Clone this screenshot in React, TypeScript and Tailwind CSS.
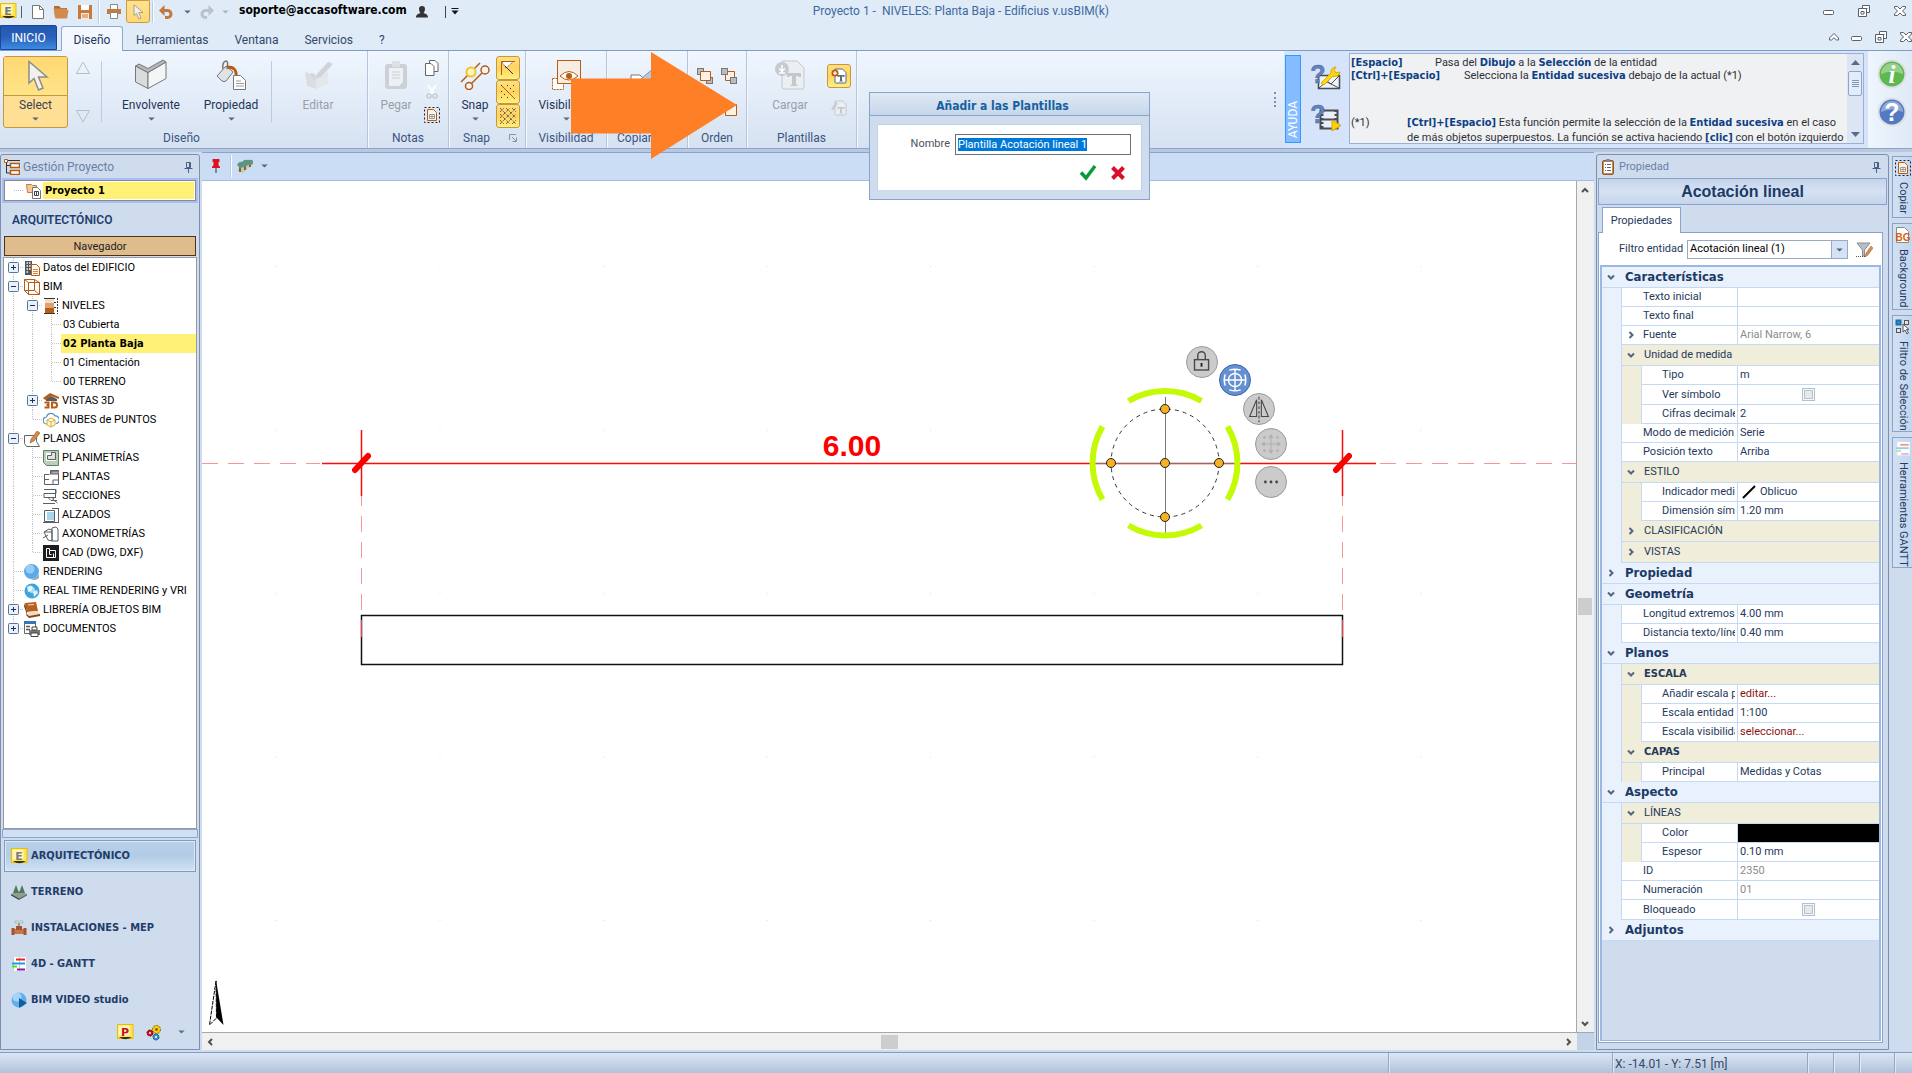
import React, { useEffect, useRef } from 'react';
import type { ReactNode } from 'react';

const TAHOMA_BOLD = "font-['DejaVu_Sans_Condensed','DejaVu_Sans',sans-serif] font-bold";
const BROWN = '#b85c14';

/* ---------- small shared drawings ---------- */

function Caret({ className = 'text-[#5b6678]' }: { className?: string }) {
  return (
    <svg width="7" height="4" viewBox="0 0 8 5" className={className} aria-hidden="true">
      <path d="M0 0.5h8L4 4.5z" fill="currentColor" />
    </svg>
  );
}

function CursorIcon({ w, h }: { w: number; h: number }) {
  return (
    <svg width={w} height={h} viewBox="0 0 22 32" aria-hidden="true">
      <path d="M2 1.5 L2 23 L7 18.5 L11.5 30 L16 28 L11.5 17 L20 17 Z" fill="#f3f1ee" stroke="#8c8c8c" strokeWidth="1.5" />
    </svg>
  );
}

function PageLogo({ letter, color = '#7a7a7a' }: { letter: string; color?: string }) {
  return (
    <svg width="17" height="17" viewBox="0 0 17 17" aria-hidden="true">
      <rect x="0.5" y="0.5" width="15.5" height="14" fill="#ffe44a" stroke="#e8bd0a" />
      <rect x="1.5" y="1.5" width="11" height="10" fill="#fff6bd" />
      <path d="M2 13 Q8 17.5 15 13 Z" fill="#3a3208" />
      <text x="8" y="11.5" textAnchor="middle" fontSize="11" fontWeight="bold" fill={color} fontFamily="DejaVu Sans, sans-serif">{letter}</text>
    </svg>
  );
}

function Pin() {
  return (
    <svg width="9" height="11" viewBox="0 0 9 11" stroke="#4a5f86" fill="none" aria-hidden="true">
      <path d="M2.5 0.5h4v5h-4zM0.5 6.5h8M4.5 7v4M5.5 1v5" />
    </svg>
  );
}

function Sep() {
  return <span className="block h-[22px] w-[2px] border-l border-[#b9cbe2] bg-white" />;
}

/* ---------- title bar ---------- */

function WinButtons({ small = false }: { small?: boolean }) {
  const s = { fill: '#fff', stroke: '#5a5f68', strokeWidth: 1 };
  return (
    <div className={small ? 'flex items-center gap-3' : 'flex items-center gap-[23px]'}>
      {small && (
        <button aria-label="Contraer cinta">
          <svg width="10" height="8" viewBox="0 0 10 8" {...s}><path d="M5 0.5 9.5 5v2h-2L5 4.8 2.5 7h-2V5z" /></svg>
        </button>
      )}
      <button aria-label="Minimizar" className="pt-1">
        <svg width="12" height="6" viewBox="0 0 12 6" {...s}><rect x="0.5" y="0.5" width="10" height="4" rx="1" /></svg>
      </button>
      <button aria-label="Restaurar">
        <svg width="12" height="12" viewBox="0 0 12 12" {...s}><path d="M4.5 0.5h7v7h-7zM6.5 3.5h3" /><path d="M0.5 3.5h8v8h-8zM3 6.5h3v2.500h-3z" /></svg>
      </button>
      <button aria-label="Cerrar" className="ml-[1px]">
        <svg width="12" height="10" viewBox="0 0 12 10" {...s}><path d="M0.500 0.500h3L6 3 8.500 0.500h3v1.500L8.500 5l3 3v1.500h-3L6 7 3.500 9.500h-3V8l3-3-3-3z" /></svg>
      </button>
    </div>
  );
}

function TitleBar() {
  return (
    <div className="flex h-[25px] items-start">
      <div className="flex h-[23px] items-center">
        <PageLogo letter="E" />
        <span className="ml-1 h-3 w-px bg-[#55606e]" />
        <button aria-label="Nuevo" className="ml-[10px]">
          <svg width="12" height="14" viewBox="0 0 12 14"><path d="M0.500 0.500h7l4 4v9h-11z" fill="#fff" stroke="#777" /><path d="M7.500 0.500v4h4" fill="none" stroke="#777" /></svg>
        </button>
        <button aria-label="Abrir" className="ml-[9px]">
          <svg width="17" height="14" viewBox="0 0 17 14"><path d="M1 1h5l2 2h6v3H4L2 13z" fill="#b06a2c" /><path d="M0.500 3.500h12l3 2-1.500 8H2.500z" fill="#d18b4e" /></svg>
        </button>
        <button aria-label="Guardar" className="ml-2">
          <svg width="15" height="14" viewBox="0 0 15 14"><path d="M0 0h14v14H0z" fill="#c87a3c" /><path d="M3 0h8v5H3z" fill="#fff" /><path d="M3 8h8v6H3z" fill="#f8eadc" /><path d="M4 10h6M4 12h6" stroke="#c87a3c" /></svg>
        </button>
        <span className="ml-[5px] mr-[7px]"><Sep /></span>
        <button aria-label="Imprimir">
          <svg width="14" height="15" viewBox="0 0 14 15"><path d="M3.500 0.500h7v5h-7z" fill="#fff" stroke="#888" /><path d="M0 5h14v5H0z" fill="#c87a3c" /><path d="M3.500 8.500h7v6h-7z" fill="#fff" stroke="#888" /></svg>
        </button>
        <button aria-label="Seleccionar" className="ml-[5px] flex h-[23px] w-6 items-center justify-center rounded-b-[3px] border border-[#c89b4c] bg-gradient-to-b from-[#ffe28c] to-[#ffd873]">
          <CursorIcon w={11} h={16} />
        </button>
        <span className="ml-[2px] mr-[5px]"><Sep /></span>
        <button aria-label="Deshacer">
          <svg width="15" height="14" viewBox="0 0 15 14"><path d="M0 5.500 5.500 0v11z" fill="#c5783b" /><path d="M4 5.500h4.500a3.500 3.500 0 0 1 0 7H6" fill="none" stroke="#c5783b" strokeWidth="3" /></svg>
        </button>
        <span className="ml-[10px]"><Caret /></span>
        <button aria-label="Rehacer" className="ml-[8px]">
          <svg width="15" height="14" viewBox="0 0 15 14"><path d="M15 5.500 9.500 0v11z" fill="#b9c1cb" /><path d="M11 5.500H6.500a3.500 3.500 0 0 0 0 7H8" fill="none" stroke="#b9c1cb" strokeWidth="3" /></svg>
        </button>
        <span className="ml-[8px]"><Caret className="text-[#aab4c1]" /></span>
        <span className={`${TAHOMA_BOLD} -mt-1 ml-[10px] text-[12px] text-black`}>soporte@accasoftware.com</span>
        <svg width="14" height="12" viewBox="0 0 14 12" className="ml-2" aria-hidden="true"><path d="M7 0c2 0 3 1.300 3 3S9 6.500 8.500 7c1.500.8 4.500 1 4.500 4.500H1C1 8 4 7.800 5.500 7 5 6.500 4 4.700 4 3s1-3 3-3z" fill="#333" /></svg>
        <span className="ml-4 h-3 w-px bg-[#444]" />
        <button aria-label="Personalizar" className="ml-[5px]">
          <svg width="8" height="7" viewBox="0 0 8 7"><path d="M0.500 0.500h7" stroke="#111" /><path d="M0.500 2.500h7L4 6.500z" fill="#111" /></svg>
        </button>
      </div>
      <div className="flex-1 whitespace-pre pl-[354px] pt-[3px] text-[12px] leading-4 text-[#3e689f]">Proyecto 1 -&nbsp; NIVELES: Planta Baja - Edificius v.usBIM(k)</div>
      <div className="pr-[6px] pt-[5px]"><WinButtons /></div>
    </div>
  );
}

function TabRow() {
  const tab = 'h-[25px] text-[12px] text-[#33486b] pt-1';
  return (
    <nav className="flex h-[26px] items-end border-b border-[#7e9cc4]">
      <button className="mr-1 h-[25px] w-[57px] self-start rounded-tr-[2px] border border-[#1a479a] bg-gradient-to-b from-[#2157ae] via-[#2a62bc] to-[#3d8ae2] text-[12px] leading-[22px] text-white">INICIO</button>
      <button className="-mb-px h-[25px] w-[62px] rounded-t-[3px] border border-b-0 border-[#8fa9cc] bg-[#f3f8fe] pt-[2px] text-[12px] text-[#22375c]">Diseño</button>
      <button className={`${tab} ml-[13px]`}>Herramientas</button>
      <button className={`${tab} ml-[26px]`}>Ventana</button>
      <button className={`${tab} ml-[26px]`}>Servicios</button>
      <button className={`${tab} ml-[26px]`}>?</button>
      <div className="ml-auto self-start pt-[6px]"><WinButtons small /></div>
    </nav>
  );
}

/* ---------- ribbon ---------- */

function Group({ label, className, children, launcher, labelClass = 'text-center' }: { label: string; className: string; children: ReactNode; launcher?: boolean; labelClass?: string }) {
  return (
    <section className={`relative flex shrink-0 flex-col border-r border-[#b4c6de] shadow-[1px_0_0_#f4f8fd] ${className}`}>
      <div className="flex h-[77px]">{children}</div>
      <div className={`h-5 text-[12px] leading-[21px] text-[#3c5482] ${labelClass}`}>{label}</div>
      {launcher && (
        <button aria-label="Opciones de snap" className="absolute bottom-[6px] right-2">
          <svg width="8" height="8" viewBox="0 0 8 8" fill="none" stroke="#8793a5"><path d="M0.500 6V0.500H7M3 3l4 4M7.500 3.500v4h-4" /></svg>
        </button>
      )}
    </section>
  );
}

function Big({ label, icon, className, caret, disabled }: { label: string; icon: ReactNode; className: string; caret?: boolean; disabled?: boolean }) {
  return (
    <button disabled={disabled} className={`flex flex-col items-center pt-2 text-[12px] leading-4 ${disabled ? 'text-[#9a9fa6]' : 'text-[#1f3456]'} ${className}`}>
      <span className="flex h-8 items-center">{icon}</span>
      <span className="mt-[6px]">{label}</span>
      {caret && <span className="mt-1"><Caret /></span>}
    </button>
  );
}

function YellowButton({ label, children }: { label: string; children: ReactNode }) {
  return (
    <button aria-label={label} className="flex h-6 w-6 items-center justify-center rounded-[3px] border border-[#c6973f] bg-gradient-to-b from-[#ffe07f] via-[#ffd45f] to-[#fff07e]">
      {children}
    </button>
  );
}

function TemplateIcon({ w, gray, badge }: { w: number; gray?: boolean; badge: 'down' | 'plus' | 'pen' }) {
  const c = gray ? '#c3c8cd' : '#5a6b88';
  return (
    <svg width={w} height={w} viewBox="0 0 32 32" aria-hidden="true">
      <path d="M8 2h15l7 7v19a2 2 0 0 1-2 2H10a2 2 0 0 1-2-2z" fill={gray ? '#eceff2' : '#fff'} stroke={c} strokeWidth={w > 20 ? 1 : 2} />
      <path d="M13 14h14v4h-2l-1-1h-2v8l2 2h-8l2-2v-8h-2l-1 1h-2z" fill={c} />
      {badge === 'pen' ? <path d="M0 19 9 4l5 3-9 13z" fill="#c9cdd1" /> : <circle cx="8" cy="10" r="7" fill={gray ? '#c6cbd0' : BROWN} />}
      {badge === 'down' && <path d="M8 6v5M5 9.500l3 3 3-3M5 14h6" stroke="#fff" strokeWidth="1.500" fill="none" />}
      {badge === 'plus' && <path d="M8 6v8M4 10h8" stroke="#fff" strokeWidth="2.500" />}
    </svg>
  );
}

function Triangle({ down }: { down?: boolean }) {
  return (
    <svg width="14" height="13" viewBox="0 0 14 13" fill="none" stroke="#b5bdc8" aria-hidden="true">
      <path d={down ? 'M0.500 0.500h13L7 12z' : 'M0.500 12.500h13L7 1z'} />
    </svg>
  );
}

function HelpQuestion({ video }: { video?: boolean }) {
  return (
    <svg width="32" height="30" viewBox="0 0 32 30" aria-hidden="true">
      {video ? (
        <>
          <rect x="10.500" y="8.500" width="17" height="18" fill="#e9eefb" stroke="#4c4c4c" strokeWidth="2" />
          <path d="M12 8v19M26 8v19" stroke="#4c4c4c" strokeWidth="3" strokeDasharray="2 2" />
          <path d="M11 17.500h16" stroke="#4c4c4c" strokeWidth="2" />
          <path d="M22 18l9 5.500-9 5.500z" fill="#fdd20a" stroke="#d9a800" />
        </>
      ) : (
        <>
          <path d="M8.500 13.500h21v13h-21z" fill="#eef2fb" stroke="#4c4c4c" strokeWidth="1.500" />
          <path d="M9 26l8-7 4 3 8-8M17 20l12 6" stroke="#4c4c4c" fill="none" />
          <path d="M11 21 21 11a5 5 0 0 1 5-6l-2 3 2 3 4-1a5 5 0 0 1-7 4L14 23z" fill="#ffd811" stroke="#d9ab00" />
        </>
      )}
      <text x="8" y="21" textAnchor="middle" fontSize="25" fontWeight="bold" fill="#6484bf" stroke="#456197" strokeWidth="0.500" fontFamily="Liberation Sans, sans-serif">?</text>
    </svg>
  );
}

function RoundHelp({ blue }: { blue?: boolean }) {
  return (
    <svg width="30" height="30" viewBox="0 0 30 30" aria-hidden="true">
      <circle cx="15" cy="15" r="13.500" fill={blue ? '#5379c2' : '#5cb84f'} stroke="#dedfe2" strokeWidth="2" />
      <path d="M4 15a11 11 0 0 1 22 0q-11-5-22 0z" fill="#fff" opacity="0.350" />
      <text x="15" y="24" textAnchor="middle" fontSize="25" fontWeight="bold" fontStyle={blue ? 'normal' : 'italic'} fill="#fff" fontFamily={blue ? 'Liberation Sans, sans-serif' : 'Liberation Serif, serif'}>{blue ? '?' : 'i'}</text>
    </svg>
  );
}

function B({ children }: { children: ReactNode }) {
  return <b className={`${TAHOMA_BOLD} text-[#0d3f85]`}>{children}</b>;
}

function HelpPanel() {
  return (
    <div className="flex shrink-0 bg-[#d6e4fb] pb-[4px] pl-px">
      <div className="mb-px mt-1 flex w-4 items-end justify-center border border-[#3399ff] bg-[#84bcff] pb-1">
        <span className="rotate-180 text-[12px] leading-[14px] text-white [writing-mode:vertical-rl]">AYUDA</span>
      </div>
      <div className="flex w-12 flex-col items-center gap-[10px] pl-[2px] pt-[11px]">
        <button aria-label="Asistencia"><HelpQuestion /></button>
        <button aria-label="Videos de ayuda"><HelpQuestion video /></button>
      </div>
      <div className="mt-[2px] flex w-[515px] border border-[#9cb0d3] bg-[#f0f1f3]">
        <div className="flex-1 overflow-hidden whitespace-nowrap pl-px text-[11px] leading-[13px] text-[#2e3038]">
          <div className="flex pt-[2px]"><span className="w-[84px]"><B>[Espacio]</B></span><span>Pasa del <B>Dibujo</B> a la <B>Selección</B> de la entidad</span></div>
          <div className="flex"><span className="w-[113px]"><B>[Ctrl]+[Espacio]</B></span><span>Selecciona la <B>Entidad sucesiva</B> debajo de la actual (*1)</span></div>
          <div className="mt-[33px] flex leading-[15px]">
            <span className="w-[56px]">(*1)</span>
            <span><B>[Ctrl]+[Espacio]</B> Esta función permite la selección de la <B>Entidad sucesiva</B> en el caso<br />de más objetos superpuestos. La función se activa haciendo <B>[clic]</B> con el botón izquierdo</span>
          </div>
        </div>
        <div className="flex w-4 flex-col items-center bg-[#dbe5f3] py-[6px]">
          <svg width="9" height="5" viewBox="0 0 9 5"><path d="M0 5h9L4.500 0z" fill="#5a6b8e" /></svg>
          <span className="mt-[6px] flex h-[25px] w-[14px] flex-col items-center justify-center gap-[1px] rounded-[2px] border border-[#8aa7d0] bg-[#e3ecf8]">
            <i className="h-px w-[7px] bg-[#7f96bf]" /><i className="h-px w-[7px] bg-[#7f96bf]" /><i className="h-px w-[7px] bg-[#7f96bf]" /><i className="h-px w-[7px] bg-[#7f96bf]" />
          </span>
          <svg width="9" height="5" viewBox="0 0 9 5" className="mt-auto"><path d="M0 0h9L4.500 5z" fill="#5a6b8e" /></svg>
        </div>
      </div>
      <div className="w-1" />
    </div>
  );
}

function Ribbon() {
  return (
    <div className="relative flex h-[97px] bg-gradient-to-b from-[#eff6fe] to-[#d6e2f1]">
      <Group label="Diseño" className="w-[368px]" labelClass="pr-1 text-center">
        <button className="ml-[3px] mt-[5px] flex h-[72px] w-[65px] flex-col items-center overflow-hidden rounded-[3px] border border-[#c6973f] bg-[#ffdf93] text-[12px] leading-4 text-[#3a4257]">
          <span className="flex h-[39px] w-full items-center justify-center border-b border-[#c6973f] bg-gradient-to-b from-[#ffd873] to-[#ffe488] pl-1"><CursorIcon w={22} h={32} /></span>
          <span className="mt-px">Select</span>
          <span className="mt-1"><Caret /></span>
        </button>
        <div className="flex w-[33px] flex-col items-center justify-between pb-[5px] pr-1 pt-[10px]"><Triangle /><Triangle down /></div>
        <span className="mt-[10px] h-[61px] border-l border-[#bccbe0]" />
        <Big label="Envolvente" className="ml-[9px] w-20" caret icon={
          <svg width="34" height="32" viewBox="0 0 34 32"><path d="M1.500 7 14 13.500v16L1.500 23z" fill="#d9dbdd" stroke="#777" /><path d="M14 13.500 32 3v16.500l-18 10z" fill="#f4f5f6" stroke="#777" /><path d="M1.500 7 5 5l9 4.500L29 1l3 2-18 10.500z" fill="#b5b8bb" stroke="#777" /></svg>
        } />
        <Big label="Propiedad" className="w-20" caret icon={
          <svg width="32" height="32" viewBox="0 0 32 32"><path d="M2 17 11 7l7 6-7 9a4 4 0 0 1-4 0z" fill="#e0e2e4" stroke="#777" /><path d="M8 10c-1-5 1-8 3-8s2 4 1 8" fill="none" stroke="#777" strokeWidth="1.500" /><path d="M12 8c6 0 10 2 9 10" fill="none" stroke={BROWN} strokeWidth="3" /><path d="M18.500 16.500h7l5 5v9h-12z" fill="#fff" stroke="#777" /><path d="M21 22h5M21 24.500h8M21 27h8" stroke="#999" /></svg>
        } />
        <span className="mt-[10px] h-[61px] border-l border-[#bccbe0]" />
        <Big label="Editar" className="w-[92px]" disabled icon={
          <svg width="32" height="32" viewBox="0 0 32 32"><path d="M3 13 14 17v13L5 27z" fill="#dadee3" /><path d="M14 17 26 13v12l-12 5z" fill="#e3e7eb" /><path d="M12 20 15 15 26 3l4 1 0 2-11 12z" fill="#d0d4da" /><path d="M12 20 8 14l5 1z" fill="#cfd4da" /></svg>
        } />
      </Group>
      <Group label="Notas" className="w-[81px]">
        <Big label="Pegar" className="w-[56px]" disabled icon={
          <svg width="24" height="30" viewBox="0 0 24 30"><rect x="1" y="4" width="22" height="25" rx="3" fill="#ccd1d7" /><path d="M5 8h14v14l-4 4H5z" fill="#eef1f4" /><path d="M8 1h8v6H8z" fill="#dde0e4" /><path d="M8 12h8M8 15h8M8 18h8" stroke="#c9ced4" /></svg>
        } />
        <div className="flex flex-col items-center gap-2 pt-[9px]">
          <button aria-label="Copiar"><svg width="14" height="16" viewBox="0 0 14 16" fill="#fff" stroke="#666"><path d="M4.500 0.500h5.500l3 3v8h-8.500z" /><path d="M0.500 3.500h5.500l3 3v9h-8.500z" /></svg></button>
          <button aria-label="Cortar" disabled><svg width="12" height="15" viewBox="0 0 12 15" fill="none" stroke="#c6cdd5" strokeWidth="1.500"><path d="M2 1l6 9M10 1 4 10" stroke="#fff" strokeWidth="2" /><circle cx="3" cy="12" r="2" /><circle cx="9" cy="12" r="2" /></svg></button>
          <button aria-label="Copiar entidad"><CopySelIcon /></button>
        </div>
      </Group>
      <Group label="Snap" className="w-[77px]" launcher labelClass="pl-[14px]">
        <Big label="Snap" className="w-[47px] pl-[5px]" caret icon={
          <svg width="30" height="30" viewBox="0 0 30 30" fill="none" stroke={BROWN} strokeWidth="1.500"><path d="M1 22 20 3M9 26 25 10" /><circle cx="11" cy="12" r="4.500" fill="#fff3c2" stroke="#f2c52e" strokeWidth="2" /><circle cx="25" cy="10" r="4" fill="#f4f8fd" /><circle cx="9" cy="26" r="3.500" fill="#f4f8fd" /></svg>
        } />
        <div className="flex flex-col pt-[5px]">
          <YellowButton label="Snap a entidades"><svg width="16" height="16" viewBox="0 0 16 16" fill="none" stroke="#5a5040"><path d="M1.500 15V1.500H15" stroke={BROWN} /><path d="M2 2l4 6 7-6" fill="#fff" strokeDasharray="1 1" /><path d="M5 6l8 8" stroke="#333" /></svg></YellowButton>
          <YellowButton label="Snap a retícula"><svg width="16" height="16" viewBox="0 0 16 16"><path d="M1 1l14 14" stroke={BROWN} /><path d="M1 1.500h1M7 1.500h1M13 1.500h1M1 7.500h1M13 7.500h1M1 13.500h1M7 13.500h1M10 4.500h1M4 10.500h1" stroke="#333" strokeWidth="1" /></svg></YellowButton>
          <YellowButton label="Retícula"><svg width="16" height="16" viewBox="0 0 16 16" stroke="#333" strokeWidth="1" strokeDasharray="1 1"><path d="M0 4l4-4M0 10 10 0M0 16 16 0M6 16 16 6M12 16l4-4M0 12l4 4M0 6l10 10M0 0l16 16M6 0l10 10M12 0l4 4" /></svg></YellowButton>
        </div>
      </Group>
      <Group label="Visibilidad" className="w-[81px]">
        <Big label="Visibilidad" className="w-20" caret icon={
          <svg width="30" height="32" viewBox="0 0 30 32"><rect x="1.500" y="19.500" width="11" height="11" fill="#fff" stroke={BROWN} strokeDasharray="2 1" /><rect x="6.500" y="1.500" width="23" height="23" fill="#f8ede3" stroke={BROWN} /><path d="M9 17q9-9 18 0-9 8-18 0z" fill="#fff" stroke={BROWN} /><circle cx="18" cy="17" r="3" fill={BROWN} /></svg>
        } />
      </Group>
      <Group label="Copiar" className="w-[81px]" labelClass="pl-[10px]">
        <button aria-label="Copiar propiedades" className="ml-[22px] mt-4 self-start"><svg width="30" height="28" viewBox="0 0 30 28"><path d="M2 8h9l4 4v12H2z" fill="#fff" stroke="#777" /><path d="M12 12 26 0v8l-10 8z" fill="#b9c9da" stroke="#8090a4" /></svg></button>
      </Group>
      <Group label="Orden" className="w-[59px]">
        <div className="grid grid-cols-2 content-start gap-x-2 gap-y-5 pl-[9px] pt-[17px]">
          {[0, 1, 2, 3].map((i) => (
            <button key={i} aria-label={'Orden ' + (i + 1)}>
              <svg width="16" height="16" viewBox="0 0 16 16">
                {i === 1 && <path d="M4.500 3.500h9v9h-9z" fill="#fdf1e4" stroke={BROWN} />}
                {i < 2 && <><rect x="0.500" y="0.500" width="6" height="6" fill="#b9bcc0" stroke="#777" /><rect x="9.500" y="9.500" width="6" height="6" fill="#b9bcc0" stroke="#777" /></>}
                {i === 0 && <path d="M3.500 3.500h10v9h-10z" fill="#fdf1e4" stroke={BROWN} />}
                {i > 1 && <path d="M4.500 0.500h11v11h-11z" fill="#fdf1e4" stroke={BROWN} />}
              </svg>
            </button>
          ))}
        </div>
      </Group>
      <Group label="Plantillas" className="w-[110px]">
        <Big label="Cargar" className="ml-[10px] w-[66px]" disabled icon={<TemplateIcon w={32} gray badge="down" />} />
        <div className="flex flex-col items-center gap-3 pl-[4px] pt-[13px]">
          <YellowButton label="Añadir a las Plantillas"><TemplateIcon w={16} badge="plus" /></YellowButton>
          <button aria-label="Editar plantilla" disabled><TemplateIcon w={16} gray badge="pen" /></button>
        </div>
      </Group>
      <div className="flex-1" />
      <span className="mr-[8px] mt-[41px] h-[15px] border-l-2 border-dotted border-[#7a8db5]" />
      <HelpPanel />
      <div className="flex w-11 flex-col items-center gap-2 bg-gradient-to-r from-[#eef5fd] to-[#dfeaf7] pl-[3px] pt-2">
        <button aria-label="Información"><RoundHelp /></button>
        <button aria-label="Ayuda"><RoundHelp blue /></button>
      </div>

      <svg width="167" height="108" viewBox="0 0 167 108" className="absolute left-[571px] top-px z-10" aria-hidden="true">
        <path d="M0 26.500h80V0l86 53-86 54V81.500H0z" fill="#ff7f27" />
      </svg>
      <TemplateDialog />
    </div>
  );
}

function TemplateDialog() {
  const ref = useRef<HTMLInputElement>(null);
  useEffect(() => { ref.current?.focus(); ref.current?.select(); }, []);
  return (
    <div role="dialog" aria-label="Añadir a las Plantillas" className="absolute left-[869px] top-[41px] z-20 h-[108px] w-[281px] border border-[#8ba3cb] bg-[#cfdcee]">
      <h2 className={`${TAHOMA_BOLD} h-[23px] border-b border-[#8ba3cb] bg-gradient-to-b from-[#dfe9f4] to-[#c6d7eb] pr-[14px] text-center text-[12px] leading-[26px] text-[#16609f]`}>Añadir a las Plantillas</h2>
      <div className="mx-[7px] mt-2 h-[66px] border border-b-0 border-[#bdd2ec] bg-white">
        <div className="flex items-center justify-end pr-[10px] pt-[9px]">
          <label htmlFor="nombre" className="mr-[5px] text-[11px] text-[#4f535c]">Nombre</label>
          <input ref={ref} id="nombre" defaultValue="Plantilla Acotación lineal 1" className="h-[21px] w-44 border border-[#6f6f6f] bg-white px-[2px] text-[11px] text-black caret-[#e8862a] outline-none selection:bg-[#0078d7] selection:text-white" />
        </div>
        <div className="flex justify-end gap-[14px] pr-4 pt-[9px]">
          <button aria-label="Aceptar"><svg width="18" height="17" viewBox="0 0 18 17"><path d="M2 8.500 7 14 16 2" fill="none" stroke="#0a9a3c" strokeWidth="3.500" /></svg></button>
          <button aria-label="Cancelar"><svg width="14" height="14" viewBox="0 0 14 14"><path d="M1.500 1.500l11 11M12.500 1.500l-11 11" stroke="#d8102c" strokeWidth="4" /></svg></button>
        </div>
      </div>
    </div>
  );
}

function CopySelIcon() {
  return (
    <svg width="16" height="16" viewBox="0 0 16 16" aria-hidden="true">
      <rect x="0.500" y="0.500" width="15" height="15" fill="none" stroke="#222" strokeDasharray="2 2" />
      <path d="M3.500 2.500h6l3 3v8h-9z" fill="#fdf2e8" stroke={BROWN} />
      <path d="M5.500 7.500h5v4h-5zM8 7.500v4M5.500 9.500h5" fill="#fff" stroke="#999" />
    </svg>
  );
}

/* ---------- project tree ---------- */

const G = '#5c5f64';
const treeIcons: Record<string, ReactNode> = {
  building: <><path d="M1 1h7v14H1z" fill="#4b5563" /><path d="M2.500 3h1.500M5 3h1.500M2.500 6h1.500M5 6h1.500M2.500 9h1.500M5 9h1.500M2.500 12h1.500" stroke="#fff" strokeWidth="1.500" /><path d="M7.500 4.500h5l3 3v8h-8z" fill="#fff7ee" stroke={BROWN} /><path d="M9 9.500h5M9 11.500h5M9 13.500h5" stroke="#c98a54" /></>,
  bim: <g fill="none" stroke={BROWN}><path d="M0.500 0.500h10v11h-10zM4.500 3.500h11v12h-11zM0.500 0.500l4 3M10.500 0.500l5 3M10.500 11.500l5 4M0.500 11.500l4 4" /></g>,
  levels: <><path d="M2 0h9v5H2z" fill="#f6dcc4" /><path d="M2 5h9v5H2z" fill="#dba273" /><path d="M2 10h9v5H2z" fill={BROWN} /><path d="M1 0.500h11M1 15.500h11" stroke="#333" /><path d="M11 4.500h3M11 9.500h3M14.500 0v16" stroke="#333" strokeDasharray="2 1" /></>,
  views3d: <><path d="M0 5 7 0l9 4v2L8 3 2 7z" fill={BROWN} /><path d="M3 6l5-3 6 3v2H3z" fill="#5b5b5b" /><path d="M1.500 9.500h4v2.500h-2 2v2.500h-4" fill="none" stroke={BROWN} strokeWidth="2" /><path d="M9 9.500v5h2.500q2.500 0 2.500-2.500t-2.500-2.500z" fill="#fff" stroke={BROWN} strokeWidth="2" /></>,
  cloud: <><path d="M4 12a3.500 3.500 0 0 1-.5-7A4.500 4.500 0 0 1 12 4a3.500 3.500 0 0 1 1 7.500" fill="#fff" stroke="#4f93c8" strokeWidth="1.200" /><path d="M8 6l4 2v5l-4 2-4-2V8zM4 8l4 2 4-2M8 10v5" fill="#fff8e0" stroke="#e2ac2b" /></>,
  plans: <><path d="M0.500 4.500h12v6l3 5h-13l-2-3z" fill="#fff" stroke="#666" /><path d="M6 12 7 8l6-8 3 2-6 8z" fill="#d08a50" stroke="#8c4a16" strokeWidth="0.500" /></>,
  planim: <><path d="M0.500 0.500h15v15h-12l-3-3z" fill="#b8d0b6" stroke="#5e7f62" /><path d="M3 3h10v8H3z" fill="#fff" /><path d="M4.500 5.500h4v-3h4v7h-8z" fill="#dfe2e4" stroke={G} /></>,
  plantas: <g fill="none" stroke={G}><path d="M6.500 5.500h-5v10h14v-14h-8v4M1 10.500h5M10 15v-4h5" /><path d="M8 2h8v3H8z" fill="#aaa" /></g>,
  secc: <g fill="none" stroke={G}><path d="M1 1.500h12v4H1M3 9.500h10M1 5.500v4h4l3 3h6M0 15.500h12M12.500 1v8l-3 2 5 4" /></g>,
  alz: <><path d="M4 5h8v8H4z" fill="#a9d3ee" /><path d="M1.500 3.500h10v11h-10zM12.500 1.500h3v14M0 15.500h16M9 1.500h7" fill="none" stroke={G} /></>,
  axo: <g fill="#fff" stroke={G}><path d="M1 6l5-3 3 1v11l-4-1zM9 2l4-1 2 2v12H9zM1 6h8M0 12l5-3" /></g>,
  cad: <><path d="M0 0h16v16H0z" fill="#1d1d1f" /><path d="M3.500 3.500h3v2h6v7h-9zM6.500 6v3.500h2M10.500 12V8.500" fill="none" stroke="#fff" /></>,
  sphere: <><circle cx="7.500" cy="7.500" r="7.500" fill="#5aa9ea" /><circle cx="6" cy="5" r="4.500" fill="#a9d6fa" opacity="0.800" /><path d="M6 15q6 1 9-5v4q-2 2-5 2z" fill="#3a4d60" opacity="0.500" /></>,
  rt: <><circle cx="8" cy="8" r="7.500" fill="#3ba5dc" /><path d="M3 4q4-3 6 0l-2 4-3 1zM9 9l4-2 1 3-4 4z" fill="#d9f1fd" /><circle cx="8" cy="7" r="3" fill="#fff" opacity="0.600" /></>,
  lib: <><path d="M1 1l11-1 2 9-11 1z" fill="#b5621f" /><path d="M1 1l2 9v3L0 4z" fill="#7a3a10" /><path d="M3 10l11-1 2 3-11 2z" fill="#f3dcc6" /><path d="M3 12l2 2 11-2v2L5 16l-3-3z" fill="#8a4413" /><path d="M4 3l6-.5" stroke="#f3dcc6" /></>,
  docs: <><path d="M0.500 0.500h11v12h-11z" fill="#fff" stroke="#666" /><path d="M0 0h12v3H0z" fill="#3576b7" /><path d="M2 5.500h4M2 8.500h4" stroke="#555" strokeWidth="1.500" /><path d="M5 9h11v5H5z" fill="#777" /><path d="M8 6h5v3H8zM7 12h7v3.500H7z" fill="#fff" stroke="#444" /></>,
};

type Node = { t: string; d: 0 | 1 | 2; icon?: string; ex?: '+' | '-'; last?: boolean; sel?: boolean };
const nodes: Node[] = [
  { t: 'Datos del EDIFICIO', d: 0, icon: 'building', ex: '+' },
  { t: 'BIM', d: 0, icon: 'bim', ex: '-' },
  { t: 'NIVELES', d: 1, icon: 'levels', ex: '-' },
  { t: '03 Cubierta', d: 2 },
  { t: '02 Planta Baja', d: 2, sel: true },
  { t: '01 Cimentación', d: 2 },
  { t: '00 TERRENO', d: 2, last: true },
  { t: 'VISTAS 3D', d: 1, icon: 'views3d', ex: '+' },
  { t: 'NUBES de PUNTOS', d: 1, icon: 'cloud', last: true },
  { t: 'PLANOS', d: 0, icon: 'plans', ex: '-' },
  { t: 'PLANIMETRÍAS', d: 1, icon: 'planim' },
  { t: 'PLANTAS', d: 1, icon: 'plantas' },
  { t: 'SECCIONES', d: 1, icon: 'secc' },
  { t: 'ALZADOS', d: 1, icon: 'alz' },
  { t: 'AXONOMETRÍAS', d: 1, icon: 'axo' },
  { t: 'CAD (DWG, DXF)', d: 1, icon: 'cad', last: true },
  { t: 'RENDERING', d: 0, icon: 'sphere' },
  { t: 'REAL TIME RENDERING y VRI', d: 0, icon: 'rt' },
  { t: 'LIBRERÍA OBJETOS BIM', d: 0, icon: 'lib', ex: '+' },
  { t: 'DOCUMENTOS', d: 0, icon: 'docs', ex: '+', last: true },
];

function Guide({ half, branch, ex }: { half?: boolean; branch?: boolean; ex?: '+' | '-' }) {
  return (
    <svg width="19" height="19" viewBox="0 0 19 19" className="shrink-0" fill="none" stroke="#c3c3c3" strokeDasharray="1 1" aria-hidden="true">
      <path d={half ? 'M9.500 0v10' : 'M9.500 0v19'} />
      {branch && <path d="M10 9.500h9" />}
      {ex && (
        <g strokeDasharray="none">
          <rect x="4.500" y="4.500" width="10" height="10" rx="1" fill="#eaf1fa" stroke="#5a7398" />
          <path d={ex === '+' ? 'M7 9.500h5M9.500 7v5' : 'M7 9.500h5'} stroke="#1d2f52" />
        </g>
      )}
    </svg>
  );
}

function TreeRow({ n }: { n: Node }) {
  return (
    <li className="flex h-[19px] items-center">
      {n.d > 0 && <Guide />}
      {n.d > 1 && <Guide />}
      <Guide branch half={n.last} ex={n.ex} />
      {n.icon && <svg width="16" height="16" viewBox="0 0 16 16" className="mx-px shrink-0" aria-hidden="true">{treeIcons[n.icon]}</svg>}
      <button className={`h-[19px] whitespace-nowrap pl-[2px] text-left text-[11px] leading-[19px] text-black ${n.sel ? `${TAHOMA_BOLD} flex-1 bg-[#fff176]` : ''}`}>{n.t}</button>
    </li>
  );
}

const modules: { t: string; icon: ReactNode }[] = [
  { t: 'ARQUITECTÓNICO', icon: <PageLogo letter="E" /> },
  { t: 'TERRENO', icon: <svg width="16" height="16" viewBox="0 0 16 16"><path d="M0 10l8-3 8 3-8 5z" fill="#8f9e8f" /><path d="M0 10l8 4.500V16L0 11.500z" fill="#3d4a3f" /><path d="M16 10l-8 4.500V16l8-4.500z" fill="#5d6b5e" /><path d="M2 9 5 1l3 8zM8 9l3-8 3 8z" fill="#4d7a58" /></svg> },
  { t: 'INSTALACIONES - MEP', icon: <svg width="16" height="16" viewBox="0 0 16 16"><path d="M4 1h8v2H4z" fill="#ddd" stroke="#999" strokeWidth="0.500" /><path d="M7 3h2v3H7z" fill="#999" /><path d="M1 9h14v5H1z" fill="#c8764a" /><path d="M5 6h6v4H5zM0.500 8h3v7h-3zM12.500 8h3v7h-3z" fill="#a55430" /></svg> },
  { t: '4D - GANTT', icon: <svg width="16" height="16" viewBox="0 0 16 16"><path d="M2 1h13v14H2z" fill="#fff" /><path d="M2.500 1v14M8.500 1v14" stroke="#ccc" /><path d="M5 3.500h9" stroke="#f02020" strokeWidth="2" /><path d="M1 7.500h13" stroke="#14a0e4" strokeWidth="2" /><path d="M1 10.500h5" stroke="#50e020" strokeWidth="2" /><path d="M6 13.500h8" stroke="#8c1a9c" strokeWidth="2" /></svg> },
  { t: 'BIM VIDEO studio', icon: <svg width="17" height="17" viewBox="0 0 17 17"><circle cx="8" cy="8" r="7.500" fill="#62aeea" /><circle cx="6" cy="5" r="4.500" fill="#b5dcfa" opacity="0.800" /><path d="M8 6l8 5-8 5z" fill="#0f5f9e" /></svg> },
];

function ProjectPanel() {
  return (
    <aside className="my-[2px] flex w-[200px] shrink-0 flex-col rounded-t-[3px] border border-[#7d8fae] bg-[#cfdcee] p-px">
      <div className="flex h-[22px] shrink-0 items-center pl-[2px] pr-[5px] text-[12px] text-[#6a7fa6]">
        <svg width="16" height="16" viewBox="0 0 16 16" fill="none" className="mr-[3px]" aria-hidden="true"><path d="M2.500 3v11h4M2.500 6.500h4M3 1.500h13" stroke="#333" /><path d="M0.500 0.500h3v3h-3z" fill="#fff" stroke={BROWN} /><path d="M6.500 4.500h9v4h-9zM6.500 11.500h9v4h-9z" fill="#fff" stroke={BROWN} strokeWidth="1.500" /></svg>
        <span className="flex-1 leading-4">Gestión Proyecto</span>
        <button aria-label="Fijar panel"><Pin /></button>
      </div>
      <div className="h-[25px] shrink-0 border-2 border-[#a5bff4]">
        <div className="flex h-[21px] items-stretch border border-[#8a8a8a] bg-white p-px">
          <span className="ml-2 mr-[3px] w-[9px] self-center border-t border-dotted border-[#bbb]" />
          <svg width="16" height="16" viewBox="0 0 16 16" className="self-center" aria-hidden="true"><path d="M0.500 1.500h5l1 1h4v7h-9z" fill="#f4c99b" stroke="#c47d3d" /><path d="M6.500 4.500h5l3 3v8h-8z" fill="#fff" stroke="#777" /><path d="M8.500 8.500h4v4h-4zM10.500 9v3" fill="none" stroke="#444" /></svg>
          <button className={`${TAHOMA_BOLD} ml-px flex-1 bg-[#fff176] pl-[2px] text-left text-[11px] leading-[17px]`}>Proyecto 1</button>
        </div>
      </div>
      <h2 className="shrink-0 pl-[10px] pt-px text-[12px] font-semibold leading-8 text-[#22406f]">ARQUITECTÓNICO</h2>
      <button className="mx-[2px] h-[20px] shrink-0 border border-[#4d3418] bg-[#e0bb8c] text-[11px] leading-[17px] text-[#222]">Navegador</button>
      <ul className="mx-px mt-px min-h-0 flex-1 overflow-hidden border border-[#9a9a9a] bg-white">
        {nodes.map((n) => <TreeRow key={n.t} n={n} />)}
      </ul>
      <div className="h-[9px] shrink-0 border border-[#8ba6cf] bg-[#cfe0f5]" />
      <div className="mt-[2px] flex shrink-0 flex-col gap-1 px-[2px]">
        {modules.map((m, i) => (
          <button key={m.t} className={`${TAHOMA_BOLD} flex h-8 items-center gap-1 border pl-[6px] text-left text-[11px] text-[#1f3d68] ${i === 0 ? 'border-[#7c9ac4] bg-gradient-to-b from-[#b9d0e9] via-[#b4cbe6] to-[#cfe3f3] shadow-[inset_0_0_0_1px_#dcebf8]' : 'border-transparent'}`}>
            <span className="w-4">{m.icon}</span>{m.t}
          </button>
        ))}
      </div>
      <div className="flex h-8 shrink-0 items-center justify-end pr-[13px]">
        <button aria-label="Primus" className="mr-3"><PageLogo letter="P" color="#c80d1c" /></button>
        <button aria-label="Configurar módulos" className="mr-[15px]">
          <svg width="17" height="17" viewBox="0 0 17 17"><circle cx="10.500" cy="5.500" r="4" fill="#fc0" stroke="#7a5a00" strokeDasharray="2 1" /><circle cx="10.500" cy="5.500" r="1.300" fill="#554" /><circle cx="4" cy="9" r="3" fill="#d0101c" stroke="#600" strokeDasharray="2 1" /><circle cx="4" cy="9" r="1" fill="#fff" /><circle cx="10" cy="13" r="3" fill="#2e9ad8" stroke="#124a70" strokeDasharray="2 1" /><circle cx="10" cy="13" r="1" fill="#fff" /></svg>
        </button>
        <button aria-label="Más"><Caret className="text-[#5b6f94]" /></button>
      </div>
    </aside>
  );
}

/* ---------- drawing area ---------- */

const wheel = [
  { l: 'Bloquear', p: 'left-[984px] top-[165px]', i: <><rect x="8" y="13.500" width="15" height="11" fill="none" stroke="#4a4a4a" strokeWidth="1.500" /><path d="M11.500 13V9a4 4 0 0 1 8 0v4" fill="none" stroke="#4a4a4a" strokeWidth="1.500" /><path d="M15.500 17v4" stroke="#222" strokeWidth="2" /></> },
  { l: 'Manipulador', p: 'left-[1017px] top-[183px]', on: true, i: <g fill="none" stroke="#fff" strokeWidth="1.500"><circle cx="16" cy="16" r="7" /><path d="M16 5v22M5 16h22M10 5.500q6-2 12 0M10 26.500q6 2 12 0M5.500 10q-2 6 0 12M26.500 10q2 6 0 12" /></g> },
  { l: 'Simetría', p: 'left-[1041px] top-[212px]', i: <g fill="none" stroke="#4a4a4a" strokeWidth="1.200"><path d="M13.500 6v18H6zM18.500 6v18H26z" /><path d="M16 3v27" strokeDasharray="3 2" /></g> },
  { l: 'Mover', p: 'left-[1053px] top-[247px]', i: <g fill="#b0b0b0" stroke="#b0b0b0"><path d="M16 7v18M7 16h18M14 9l2-3 2 3zM14 23l2 3 2-3zM9 14l-3 2 3 2zM23 14l3 2-3 2z" /><circle cx="9" cy="9" r="1" /><circle cx="23" cy="9" r="1" /><circle cx="9" cy="23" r="1" /><circle cx="23" cy="23" r="1" /></g> },
  { l: 'Más opciones', p: 'left-[1053px] top-[285px]', i: <g fill="#444"><circle cx="10" cy="16" r="1.500" /><circle cx="16" cy="16" r="1.500" /><circle cx="22" cy="16" r="1.500" /></g> },
];

function Drawing() {
  const pts: [number, number][] = [[963, 282], [963, 228], [963, 336], [909, 282], [1017, 282]];
  return (
    <div className="relative min-h-0 min-w-0 flex-1 overflow-hidden bg-white">
      <svg width="100%" height="100%" className="absolute inset-0" role="img" aria-label="Planta Baja">
        <defs>
          <pattern id="grid" x="74" y="85" width="163.500" height="163.500" patternUnits="userSpaceOnUse"><rect x="0" y="0" width="1" height="1" fill="#dcdcdc" /></pattern>
        </defs>
        <rect width="100%" height="100%" fill="url(#grid)" />
        <path d="M0 282.500h118" stroke="#ff9292" strokeDasharray="16 10" />
        <path d="M1178 282.500h600" stroke="#ff9292" strokeDasharray="16 10" />
        <rect x="159.500" y="434.500" width="981" height="49" fill="none" stroke="#111" strokeWidth="1.500" />
        <path d="M159.500 315v142M1140.500 315v142" stroke="#ff9292" strokeDasharray="16 10" strokeDashoffset="6" />
        <path d="M159.500 439v17M1140.500 439v17" stroke="#f04040" />
        <path d="M120 282.500h1054M159.500 249v66M1140.500 249v66" stroke="#fb0a0a" strokeWidth="1.500" />
        <path d="M153 289l13-14M1134 289l13-14" stroke="#fb0000" strokeWidth="6" strokeLinecap="round" />
        <text x="650" y="275" textAnchor="middle" fontSize="30" fontWeight="bold" fill="#fb0000" fontFamily="Liberation Sans, sans-serif">6.00</text>
        <path d="M963.500 216v136M891 282.500h144" stroke="#777" />
        <circle cx="963" cy="282" r="54" fill="none" stroke="#333" strokeDasharray="4 4" />
        <g fill="none" stroke="#c4fb04" strokeWidth="6">
          <path d="M926.500 220a72 72 0 0 1 73 0" />
          <path d="M926.500 344.500a72 72 0 0 0 73 0" />
          <path d="M900.500 245.500a72 72 0 0 0 0 73" />
          <path d="M1025.500 245.500a72 72 0 0 1 0 73" />
        </g>
        {pts.map(([x, y]) => <circle key={x + '-' + y} cx={x} cy={y} r="4.500" fill="#f9b021" stroke="#222" />)}
      </svg>
      {wheel.map((w) => (
        <button key={w.l} aria-label={w.l} className={`absolute ${w.p} flex h-8 w-8 items-center justify-center rounded-full border ${w.on ? 'border-[#3d68ac] bg-[#648fd0]' : 'border-[#9b9b9b] bg-[#cbcbcb]'}`}>
          <svg width="30" height="30" viewBox="0 0 32 32" className="shrink-0">{w.i}</svg>
        </button>
      ))}
      <svg width="17" height="48" viewBox="0 0 17 48" className="absolute bottom-[5px] left-[6px]" aria-label="Norte"><path d="M8 2 1.500 46l7-7z" fill="#fff" stroke="#000" strokeDasharray="4 1" /><path d="M8 1l7.500 45-7-7.500z" fill="#000" /></svg>
    </div>
  );
}

function ScrollArrow({ d, label }: { d: string; label: string }) {
  return (
    <button aria-label={label} className="flex h-[17px] w-4 shrink-0 items-center justify-center">
      <svg width="8" height="8" viewBox="0 0 8 8" fill="none" stroke="#505050" strokeWidth="2"><path d={d} /></svg>
    </button>
  );
}

function CanvasArea() {
  return (
    <main className="ml-[2px] mr-[2px] flex min-w-0 flex-1 flex-col border-t border-[#8ba3cb]">
      <div className="flex h-[28px] shrink-0 items-center border-b border-[#a3bbdd] bg-[#cbddf4] pb-px pl-[10px]">
        <button aria-label="Fijar" className="mr-[10px]"><svg width="8" height="14" viewBox="0 0 8 14"><path d="M0.500 0h7v3h-1v3l1.500 2v1H0V8l1.500-2V3h-1z" fill="#e01020" /><path d="M4 9v5" stroke="#333" /></svg></button>
        <Sep />
        <button aria-label="Vista" className="ml-[5px] mr-2"><svg width="16" height="15" viewBox="0 0 16 15"><path d="M0 11l13-7 3 1-10 9z" fill="#b9cdb0" /><path d="M3 7v6M8 6v5M13 4v4" stroke="#9a5c2c" strokeWidth="2" /><path d="M0 6q2-4 5-3 2-3 6-2 4-1 5 1v3l-5 1-3 2-5 1z" fill="#5f9482" /></svg></button>
        <Caret />
      </div>
      <div className="flex min-h-0 flex-1">
        <Drawing />
        <div className="flex w-[18px] flex-col items-center border-l border-[#a8a8a8] bg-[#f0f0f0] pr-px">
          <ScrollArrow label="Desplazar arriba" d="M1 6l3-3 3 3" />
          <span className="h-[400px] shrink" />
          <span className="h-[17px] w-[14px] shrink-0 bg-[#cdcdcd]" />
          <span className="flex-1" />
          <ScrollArrow label="Desplazar abajo" d="M1 2l3 3 3-3" />
        </div>
      </div>
      <div className="flex h-[18px] shrink-0 border-t border-[#a8a8a8]">
        <div className="flex flex-1 items-center bg-[#f0f0f0]">
          <ScrollArrow label="Desplazar izquierda" d="M6 1L3 4l3 3" />
          <span className="flex-1" />
          <span className="h-[14px] w-[17px] bg-[#cdcdcd]" />
          <span className="flex-1" />
          <ScrollArrow label="Desplazar derecha" d="M2 1l3 3-3 3" />
        </div>
        <div className="w-[17px] bg-[#c3d3e8]" />
      </div>
      <div className="h-[2px] shrink-0" />
    </main>
  );
}

/* ---------- property panel ---------- */

type Row = { k: 'h' | 's' | 'p' | 'n'; t: string; open?: boolean; bold?: boolean; v?: string; muted?: boolean; link?: boolean; check?: boolean; color?: boolean; line?: boolean; gut?: boolean };
const rows: Row[] = [
  { k: 'h', t: 'Características', open: true },
  { k: 'p', t: 'Texto inicial' }, { k: 'p', t: 'Texto final' },
  { k: 'p', t: 'Fuente', v: 'Arial Narrow, 6', muted: true, gut: true },
  { k: 's', t: 'Unidad de medida', open: true },
  { k: 'n', t: 'Tipo', v: 'm' }, { k: 'n', t: 'Ver símbolo', check: true }, { k: 'n', t: 'Cifras decimale', v: '2' },
  { k: 'p', t: 'Modo de medición', v: 'Serie' }, { k: 'p', t: 'Posición texto', v: 'Arriba' },
  { k: 's', t: 'ESTILO', open: true },
  { k: 'n', t: 'Indicador medi', v: 'Oblicuo', line: true }, { k: 'n', t: 'Dimensión símb', v: '1.20 mm' },
  { k: 's', t: 'CLASIFICACIÓN' }, { k: 's', t: 'VISTAS' },
  { k: 'h', t: 'Propiedad' }, { k: 'h', t: 'Geometría', open: true },
  { k: 'p', t: 'Longitud extremos', v: '4.00 mm' }, { k: 'p', t: 'Distancia texto/líne', v: '0.40 mm' },
  { k: 'h', t: 'Planos', open: true },
  { k: 's', t: 'ESCALA', open: true, bold: true },
  { k: 'n', t: 'Añadir escala p', v: 'editar...', link: true }, { k: 'n', t: 'Escala entidad', v: '1:100' }, { k: 'n', t: 'Escala visibilida', v: 'seleccionar...', link: true },
  { k: 's', t: 'CAPAS', open: true, bold: true },
  { k: 'n', t: 'Principal', v: 'Medidas y Cotas' },
  { k: 'h', t: 'Aspecto', open: true },
  { k: 's', t: 'LÍNEAS', open: true },
  { k: 'n', t: 'Color', color: true }, { k: 'n', t: 'Espesor', v: '0.10 mm' },
  { k: 'p', t: 'ID', v: '2350', muted: true }, { k: 'p', t: 'Numeración', v: '01', muted: true }, { k: 'p', t: 'Bloqueado', check: true },
  { k: 'h', t: 'Adjuntos' },
];

function Chevron({ open }: { open?: boolean }) {
  return (
    <svg width="8" height="8" viewBox="0 0 8 8" fill="none" stroke="#56657f" strokeWidth="2" className="shrink-0" aria-hidden="true">
      <path d={open ? 'M1 2.500l3 3 3-3' : 'M2.500 1l3 3-3 3'} />
    </svg>
  );
}

function PropRow({ r }: { r: Row }) {
  const line = 'border-b border-[#c3d9f5]';
  if (r.k === 'h') {
    return (
      <tr className="h-[21px] bg-[#e8f1fc]">
        <th colSpan={4} className={`${line} p-0 text-left`}>
          <button className={`${TAHOMA_BOLD} flex items-center gap-[10px] pl-[5px] text-[13px] leading-[20px] text-[#1b3a66]`}><Chevron open={r.open} />{r.t}</button>
        </th>
      </tr>
    );
  }
  if (r.k === 's') {
    return (
      <tr className="h-[21px]">
        <td className="bg-[#e8f1fc] p-0" />
        <th colSpan={3} className={`${line} border-l bg-[#f0edda] p-0 text-left font-normal`}>
          <button className={`flex items-center gap-[9px] pl-[5px] leading-[20px] ${r.bold ? TAHOMA_BOLD : ''}`}><Chevron open={r.open} />{r.t}</button>
        </th>
      </tr>
    );
  }
  const id = 'p-' + r.t.replace(/\W/g, '');
  return (
    <tr className={r.check ? 'h-5' : 'h-[19px]'}>
      <td className="bg-[#e8f1fc] p-0" />
      {r.k === 'n' && <td className="border-l border-[#c3d9f5] bg-[#f0edda] p-0" />}
      <th colSpan={r.k === 'p' ? 2 : 1} className={`${line} border-l bg-white p-0 text-left font-normal`}>
        <span className="mr-[2px] flex items-center overflow-hidden whitespace-nowrap leading-[18px]">
          {r.gut ? <span className="flex w-[21px] pl-[5px]"><Chevron /></span> : <span className={r.k === 'n' ? 'w-5 shrink-0' : 'w-[21px] shrink-0'} />}
          {r.check ? <label htmlFor={id}>{r.t}</label> : r.t}
        </span>
      </th>
      <td className={`${line} border-l p-0 ${r.color ? 'bg-black' : 'bg-white'}`}>
        {r.check ? (
          <span className="flex justify-center"><input id={id} type="checkbox" className="h-[13px] w-[13px] appearance-none border border-[#aebfd8] bg-[#e6e8eb] shadow-[inset_0_0_0_1px_#f7f8fa,inset_0_0_0_2px_#bcc1c8]" /></span>
        ) : r.link ? (
          <button className="block pl-[2px] leading-[18px] text-[#8b1010]">{r.v}</button>
        ) : (
          <span className={`flex items-center pl-[2px] leading-[18px] ${r.muted ? 'text-[#8c8c8c]' : ''}`}>
            {r.line && <svg width="14" height="14" viewBox="0 0 14 14" className="ml-[2px] mr-1"><path d="M1 13L13 1" stroke="#000" strokeWidth="2" /></svg>}
            {r.v}
          </span>
        )}
      </td>
    </tr>
  );
}

function PropertyPanel() {
  return (
    <aside className="my-[2px] flex w-[293px] shrink-0 flex-col rounded-t-[3px] border border-[#7d8fae] bg-[#cfdcee] p-px text-[11px] text-[#25395c]">
      <div className="flex h-[22px] shrink-0 items-center pl-[4px] pr-[6px] text-[#6a7fa6]">
        <svg width="12" height="16" viewBox="0 0 12 16" className="mr-[5px]" aria-hidden="true"><rect x="0.500" y="1.500" width="11" height="14" rx="1.500" fill="#c98a54" stroke="#8a5a30" /><path d="M2 3h8v11H2z" fill="#fff" /><path d="M4 0h4v3H4z" fill="#888" /><path d="M3 5.500h1M5 5.500h4M3 8.500h1M5 8.500h4M3 11.500h1M5 11.500h4" stroke="#666" /></svg>
        <span className="flex-1">Propiedad</span>
        <button aria-label="Fijar panel"><Pin /></button>
      </div>
      <h2 className="h-[27px] shrink-0 border border-[#8ba3cb] bg-gradient-to-b from-[#c5d3ea] via-[#d6e2f2] to-[#c5d5ec] text-center font-['Liberation_Sans',sans-serif] text-[16px] font-bold leading-[25px] text-[#1b3a66]">Acotación lineal</h2>
      <div className="mt-[2px] flex shrink-0 pl-[4px]"><button className="z-10 -mb-px h-[26px] w-[79px] border border-b-0 border-[#8ba3cb] bg-white pt-px text-[#25395c]">Propiedades</button></div>
      <div className="mb-[5px] mr-[4px] flex min-h-0 flex-1 flex-col border border-[#8ba3cb] bg-white p-px">
        <div className="flex h-[31px] shrink-0 items-center pl-[19px]">
          <label htmlFor="filtro" className="w-[66px] whitespace-nowrap">Filtro entidad</label>
          <span className="relative ml-[2px] h-[19px] w-[161px]">
            <select id="filtro" className="h-[19px] w-full appearance-none border border-[#9aaac6] bg-white pl-[2px] pr-5 text-[11px] text-black"><option>Acotación lineal (1)</option></select>
            <span className="pointer-events-none absolute right-px top-px flex h-[17px] w-4 items-center justify-center border-l border-[#9aaac6] bg-[#d4e2f5]"><Caret className="text-[#4a6088]" /></span>
          </span>
          <button aria-label="Editar filtro" className="ml-[8px]"><svg width="17" height="16" viewBox="0 0 17 16"><path d="M1 1h13L8.500 8v6H6.500V8z" fill="#b9bcc0" stroke="#8a8d92" /><path d="M9 15l1-4 5-7 2 2-5 7z" fill="#d58f52" stroke="#9a5c2c" strokeWidth="0.500" /><path d="M0 14.500h9" stroke="#555" strokeDasharray="1 1" /></svg></button>
        </div>
        <div className="min-h-0 flex-1 overflow-hidden border-2 border-b border-[#9db8e0] bg-[#cfdcee]">
          <table className="w-full table-fixed border-separate border-spacing-0 text-[11px]">
            <colgroup><col className="w-[19px]" /><col className="w-[20px]" /><col className="w-[96px]" /><col /></colgroup>
            <tbody>{rows.map((r) => <PropRow key={r.k + r.t} r={r} />)}</tbody>
          </table>
        </div>
      </div>
    </aside>
  );
}

/* ---------- side tabs ---------- */

function SideTabs() {
  const tabs: { t: string; h: string; i: ReactNode }[] = [
    { t: 'Copiar', h: 'h-[62px]', i: <CopySelIcon /> },
    { t: 'Background', h: 'h-[87px]', i: <svg width="16" height="16" viewBox="0 0 16 16"><path d="M1.500 0.500h8l4 4v11h-12z" fill="#fff" stroke="#8a8a8a" /><text x="8" y="14" textAnchor="middle" fontSize="10" fontWeight="bold" fill="#dd6010" fontFamily="Liberation Sans, sans-serif">BG</text></svg> },
    { t: 'Filtro de Selección', h: 'h-[117px]', i: <svg width="16" height="16" viewBox="0 0 16 16" fill="#dfe3ea" stroke="#555"><rect x="1.500" y="1.500" width="4" height="4" fill="#3aa0e0" stroke="#1c6fa8" strokeWidth="2" /><rect x="9.500" y="1.500" width="4" height="4" /><rect x="1.500" y="9.500" width="4" height="4" /><path d="M8 5v8l2-2 2 4 1.500-1-2-3.500H14z" fill="#fff" /></svg> },
    { t: 'Herramientas GANTT', h: 'h-[131px]', i: <svg width="16" height="16" viewBox="0 0 16 16"><path d="M2 1h13v14H2z" fill="#fff" /><path d="M5 4h9" stroke="#f79a8a" strokeWidth="2" /><path d="M1 7.500h13" stroke="#94cdf0" strokeWidth="2" /><path d="M1 10.500h5" stroke="#b9e89a" strokeWidth="2" /><path d="M6 13.500h8" stroke="#e6b6e2" strokeWidth="2" /></svg> },
  ];
  return (
    <div className="mt-1 flex w-[21px] shrink-0 flex-col gap-[5px] pl-px">
      {tabs.map((s) => (
        <button key={s.t} className={`flex shrink-0 flex-col items-center gap-[6px] border border-r-0 border-[#8ba3cb] bg-gradient-to-r from-[#d3e1f4] to-[#c2d6ee] pl-px pt-[3px] text-[11px] text-[#25395c] ${s.h}`}>
          {s.i}
          <span className="whitespace-nowrap leading-[14px] [writing-mode:vertical-rl]">{s.t}</span>
        </button>
      ))}
    </div>
  );
}

function StatusBar() {
  const cell = 'h-full border-l border-[#93a9c8] shadow-[inset_1px_0_0_#dfe9f5]';
  return (
    <footer className="flex h-[21px] shrink-0 items-stretch justify-end border-t border-[#7f9cc4] bg-gradient-to-b from-[#dce6f3] to-[#b0c3db] text-[12px] leading-[23px] text-[#33486b]">
      <div className={`${cell} w-[224px]`} />
      <div className={`${cell} w-[195px] whitespace-nowrap pl-[2px]`}>X: -14.01 - Y: 7.51 [m]</div>
      <div className={`${cell} w-[26px]`} /><div className={`${cell} w-[26px]`} /><div className={`${cell} w-[35px]`} /><div className={`${cell} w-[18px]`} />
    </footer>
  );
}

export default function App() {
  return (
    <div className="flex h-screen w-full flex-col overflow-hidden bg-[#dfebf7] font-['Roboto',sans-serif]">
      <header className="shrink-0">
        <TitleBar />
        <TabRow />
        <Ribbon />
        <div className="h-1 border-t border-[#8fa6c8] bg-[#b8c9df]" />
      </header>
      <div className="flex min-h-0 flex-1 bg-[#cfdcee]">
        <ProjectPanel />
        <CanvasArea />
        <PropertyPanel />
        <div className="w-[2px] shrink-0" />
        <SideTabs />
      </div>
      <StatusBar />
    </div>
  );
}
